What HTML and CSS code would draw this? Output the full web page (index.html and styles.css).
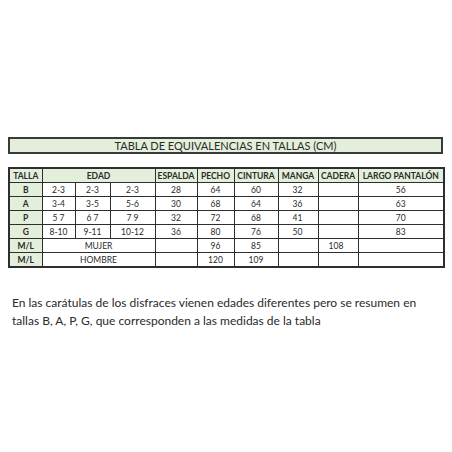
FILE: index.html
```html
<!DOCTYPE html>
<html>
<head>
<meta charset="utf-8">
<link rel="stylesheet" href="styles.css">
</head>
<body>
<div class="page">
  <div class="title">TABLA DE EQUIVALENCIAS EN TALLAS (CM)</div>
  <table class="sizes">
    <colgroup>
      <col class="c-talla"><col class="c-e1"><col class="c-e2"><col class="c-e3">
      <col class="c-esp"><col class="c-pecho"><col class="c-cint"><col class="c-manga">
      <col class="c-cad"><col class="c-largo">
    </colgroup>
    <tr class="head">
      <th>TALLA</th><th colspan="3">EDAD</th><th>ESPALDA</th><th>PECHO</th><th>CINTURA</th><th>MANGA</th><th>CADERA</th><th>LARGO PANTALÓN</th>
    </tr>
    <tr><th>B</th><td>2-3</td><td>2-3</td><td>2-3</td><td>28</td><td>64</td><td>60</td><td class="manga">32</td><td></td><td>56</td></tr>
    <tr><th>A</th><td>3-4</td><td>3-5</td><td>5-6</td><td>30</td><td>68</td><td>64</td><td class="manga">36</td><td></td><td>63</td></tr>
    <tr><th>P</th><td>5 7</td><td>6 7</td><td>7 9</td><td>32</td><td>72</td><td>68</td><td class="manga">41</td><td></td><td>70</td></tr>
    <tr><th>G</th><td>8-10</td><td>9-11</td><td>10-12</td><td>36</td><td>80</td><td>76</td><td class="manga">50</td><td></td><td>83</td></tr>
    <tr><th>M/L</th><td colspan="3">MUJER</td><td></td><td>96</td><td>85</td><td></td><td class="cadera">108</td><td></td></tr>
    <tr><th>M/L</th><td colspan="3">HOMBRE</td><td></td><td>120</td><td>109</td><td></td><td></td><td></td></tr>
  </table>
  <p class="note">En las carátulas de los disfraces vienen edades diferentes pero se resumen en tallas B, A, P, G, que corresponden a las medidas de la tabla</p>
</div>
</body>
</html>
```
FILE: styles.css
```css
html, body {
  margin: 0;
  padding: 0;
  background: #ffffff;
}
.page {
  padding: 137px 9px 0 8px;
  font-family: Lato, "Open Sans", sans-serif;
  color: #2a2a2a;
}
.title {
  height: 17px;
  box-sizing: border-box;
  border: 2px solid #3a3a3a;
  background: #e3efda;
  text-align: center;
  font-size: 11px;
  line-height: 13px;
}
.sizes {
  margin-top: 13px;
  width: 435px;
  border-collapse: collapse;
  table-layout: fixed;
  border: 2px solid #2e2e2e;
}
.sizes th, .sizes td {
  border: 1px solid #2e2e2e;
  height: 13px;
  padding: 0;
  font-size: 8.5px;
  line-height: 12px;
  text-align: center;
  white-space: nowrap;
  overflow: hidden;
}
.sizes th {
  background: #e3efda;
  font-weight: bold;
}
.sizes td.manga {
  text-align: left;
  padding-left: 14px;
}
.sizes td.cadera {
  text-align: left;
  padding-left: 10px;
}
.c-talla { width: 33px; }
.c-e1 { width: 33px; }
.c-e2 { width: 35px; }
.c-e3 { width: 45px; }
.c-esp { width: 42px; }
.c-pecho { width: 37px; }
.c-cint { width: 44px; }
.c-manga { width: 40px; }
.c-cad { width: 40px; }
.c-largo { width: 86px; }
.note {
  margin: 26px 0 0 4px;
  font-size: 12px;
  line-height: 18px;
  width: 425px;
}
```
